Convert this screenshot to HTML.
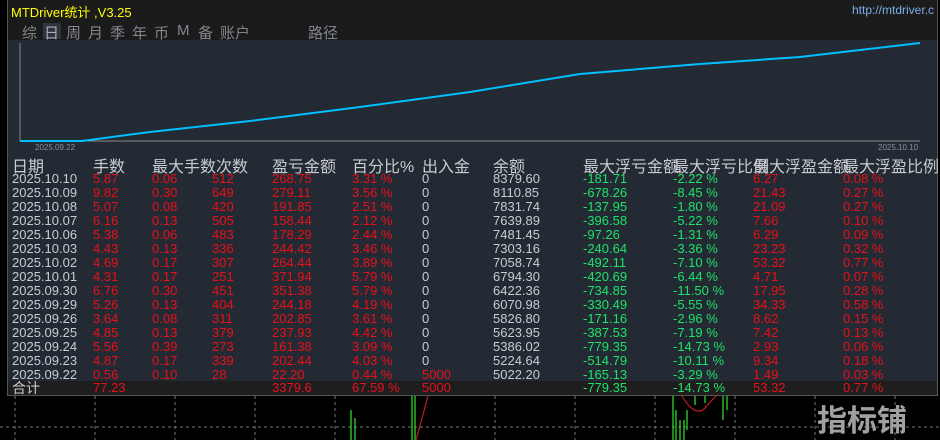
<!DOCTYPE html>
<html><head><meta charset="utf-8"><style>
*{margin:0;padding:0;box-sizing:border-box}
body{width:940px;height:440px;background:#000;position:relative;overflow:hidden;font-family:"Liberation Sans","Noto Sans CJK SC",sans-serif}
.a{position:absolute;white-space:nowrap}
#panel{position:absolute;left:7px;top:0;width:931px;height:396px;background:#232a33;border:1px solid #555;border-top:none}
#top{position:absolute;left:0;top:0;width:100%;height:40px;background:#1b1b1b}
.tab{font-size:15px;color:#80868e;top:22px}
.h{font-size:16px;color:#c8ccd2;top:153px}
.r{font-size:13px;height:14px;line-height:14px}
.d{color:#c8ccd2}.red{color:#e8101a}.g{color:#1de36a}
</style></head><body>
<svg class="a" style="left:0;top:0" width="940" height="440">
<g stroke="#777" stroke-dasharray="3,3" stroke-width="1">
<line x1="15" y1="396" x2="15" y2="440"/><line x1="95" y1="396" x2="95" y2="440"/><line x1="175" y1="396" x2="175" y2="440"/><line x1="255" y1="396" x2="255" y2="440"/><line x1="335" y1="396" x2="335" y2="440"/><line x1="415" y1="396" x2="415" y2="440"/><line x1="495" y1="396" x2="495" y2="440"/><line x1="575" y1="396" x2="575" y2="440"/><line x1="655" y1="396" x2="655" y2="440"/><line x1="735" y1="396" x2="735" y2="440"/><line x1="815" y1="396" x2="815" y2="440"/><line x1="895" y1="396" x2="895" y2="440"/>
<line x1="0" y1="427" x2="940" y2="427"/>
</g>
<g stroke="#2ad62a" stroke-width="1.3"><line x1="351" y1="410" x2="351" y2="440"/><line x1="355" y1="418" x2="355" y2="440"/><line x1="412" y1="396" x2="412" y2="440"/><line x1="415" y1="396" x2="415" y2="440"/><line x1="673" y1="396" x2="673" y2="440"/><line x1="676" y1="410" x2="676" y2="440"/><line x1="680" y1="420" x2="680" y2="440"/><line x1="684" y1="420" x2="684" y2="440"/><line x1="687" y1="410" x2="687" y2="430"/><line x1="695" y1="396" x2="695" y2="405"/><line x1="705" y1="396" x2="705" y2="403"/><line x1="723" y1="396" x2="723" y2="420"/><line x1="727" y1="396" x2="727" y2="410"/></g>
<path d="M416 440 L428 396" stroke="#e02020" fill="none"/>
<path d="M682 396 Q695 418 705 408 Q712 400 716 396" stroke="#e02020" fill="none"/>
</svg>
<div class="a" style="left:817px;top:396px;font-size:30px;font-weight:bold;color:#a0a0a0">指标铺</div>
<div id="panel">
<div id="top"></div>
</div>
<div class="a" style="left:11px;top:2px;font-size:13px;color:#ffff00">MTDriver统计 ,V3.25</div>
<div class="a" style="left:852px;top:3px;font-size:12px;color:#7ab0e8">http://mtdriver.c</div>
<div class="a" style="left:43px;top:23px;width:18px;height:16px;background:#2e3540"></div>
<div class="a tab" style="left:22px">综</div><div class="a tab" style="left:44px;color:#a8aeb6">日</div><div class="a tab" style="left:66px">周</div><div class="a tab" style="left:88px">月</div><div class="a tab" style="left:110px">季</div><div class="a tab" style="left:132px">年</div><div class="a tab" style="left:154px">币</div><div class="a tab" style="left:177px">M</div><div class="a tab" style="left:198px">备</div><div class="a tab" style="left:220px">账户</div><div class="a tab" style="left:308px">路径</div>
<svg class="a" style="left:0;top:0" width="940" height="150">
<line x1="20" y1="43" x2="20" y2="141" stroke="#888"/>
<line x1="20" y1="141" x2="920" y2="141" stroke="#888"/>
<polyline points="20,141 82,141 150,132 250,121 360,107 470,92 580,74 700,64 800,57 920,43" stroke="#00bfff" stroke-width="2" fill="none"/>
<text x="35" y="150" font-size="8" fill="#8a9099" font-family="Liberation Sans">2025.09.22</text>
<text x="878" y="150" font-size="8" fill="#8a9099" font-family="Liberation Sans">2025.10.10</text>
</svg>
<div class="a h" style="left:12px">日期</div><div class="a h" style="left:93px">手数</div><div class="a h" style="left:152px">最大手数次数</div><div class="a h" style="left:272px">盈亏金额</div><div class="a h" style="left:352px">百分比%</div><div class="a h" style="left:422px">出入金</div><div class="a h" style="left:493px">余额</div><div class="a h" style="left:583px">最大浮亏金额</div><div class="a h" style="left:673px">最大浮亏比例</div><div class="a h" style="left:753px">最大浮盈金额</div><div class="a h" style="left:843px">最大浮盈比例</div>
<div class="a" style="left:8px;top:381px;width:929px;height:14px;background:#1e1e1e"></div>
<div id="rows"></div>
<script>
var D=[["2025.10.10","5.87","0.06","512","268.75","3.31 %","0","8379.60","-181.71","-2.22 %","6.27","0.08 %"],
["2025.10.09","9.82","0.30","649","279.11","3.56 %","0","8110.85","-678.26","-8.45 %","21.43","0.27 %"],
["2025.10.08","5.07","0.08","420","191.85","2.51 %","0","7831.74","-137.95","-1.80 %","21.09","0.27 %"],
["2025.10.07","6.16","0.13","505","158.44","2.12 %","0","7639.89","-396.58","-5.22 %","7.66","0.10 %"],
["2025.10.06","5.38","0.06","483","178.29","2.44 %","0","7481.45","-97.26","-1.31 %","6.29","0.09 %"],
["2025.10.03","4.43","0.13","336","244.42","3.46 %","0","7303.16","-240.64","-3.36 %","23.23","0.32 %"],
["2025.10.02","4.69","0.17","307","264.44","3.89 %","0","7058.74","-492.11","-7.10 %","53.32","0.77 %"],
["2025.10.01","4.31","0.17","251","371.94","5.79 %","0","6794.30","-420.69","-6.44 %","4.71","0.07 %"],
["2025.09.30","6.76","0.30","451","351.38","5.79 %","0","6422.36","-734.85","-11.50 %","17.95","0.28 %"],
["2025.09.29","5.26","0.13","404","244.18","4.19 %","0","6070.98","-330.49","-5.55 %","34.33","0.58 %"],
["2025.09.26","3.64","0.08","311","202.85","3.61 %","0","5826.80","-171.16","-2.96 %","8.62","0.15 %"],
["2025.09.25","4.85","0.13","379","237.93","4.42 %","0","5623.95","-387.53","-7.19 %","7.42","0.13 %"],
["2025.09.24","5.56","0.39","273","161.38","3.09 %","0","5386.02","-779.35","-14.73 %","2.93","0.06 %"],
["2025.09.23","4.87","0.17","339","202.44","4.03 %","0","5224.64","-514.79","-10.11 %","9.34","0.18 %"],
["2025.09.22","0.56","0.10","28","22.20","0.44 %","5000","5022.20","-165.13","-3.29 %","1.49","0.03 %"],
["合计","77.23","","","3379.6","67.59 %","5000","","-779.35","-14.73 %","53.32","0.77 %"]];
var X=[12,93,152,212,272,352,422,493,583,673,753,843];
var C=["d","red","red","red","red","red","d","d","g","g","red","red"];
var h="";
D.forEach(function(r,i){var y=172+i*14;if(i==15)y=381;r.forEach(function(t,j){var c=C[j];if(i>=14&&j==6)c="red";h+='<div class="a r '+c+'" style="left:'+X[j]+'px;top:'+y+'px'+(i==15&&j==0?';font-size:14px':'')+'">'+t+'</div>';});});
document.getElementById("rows").innerHTML=h;
</script>
</body></html>
